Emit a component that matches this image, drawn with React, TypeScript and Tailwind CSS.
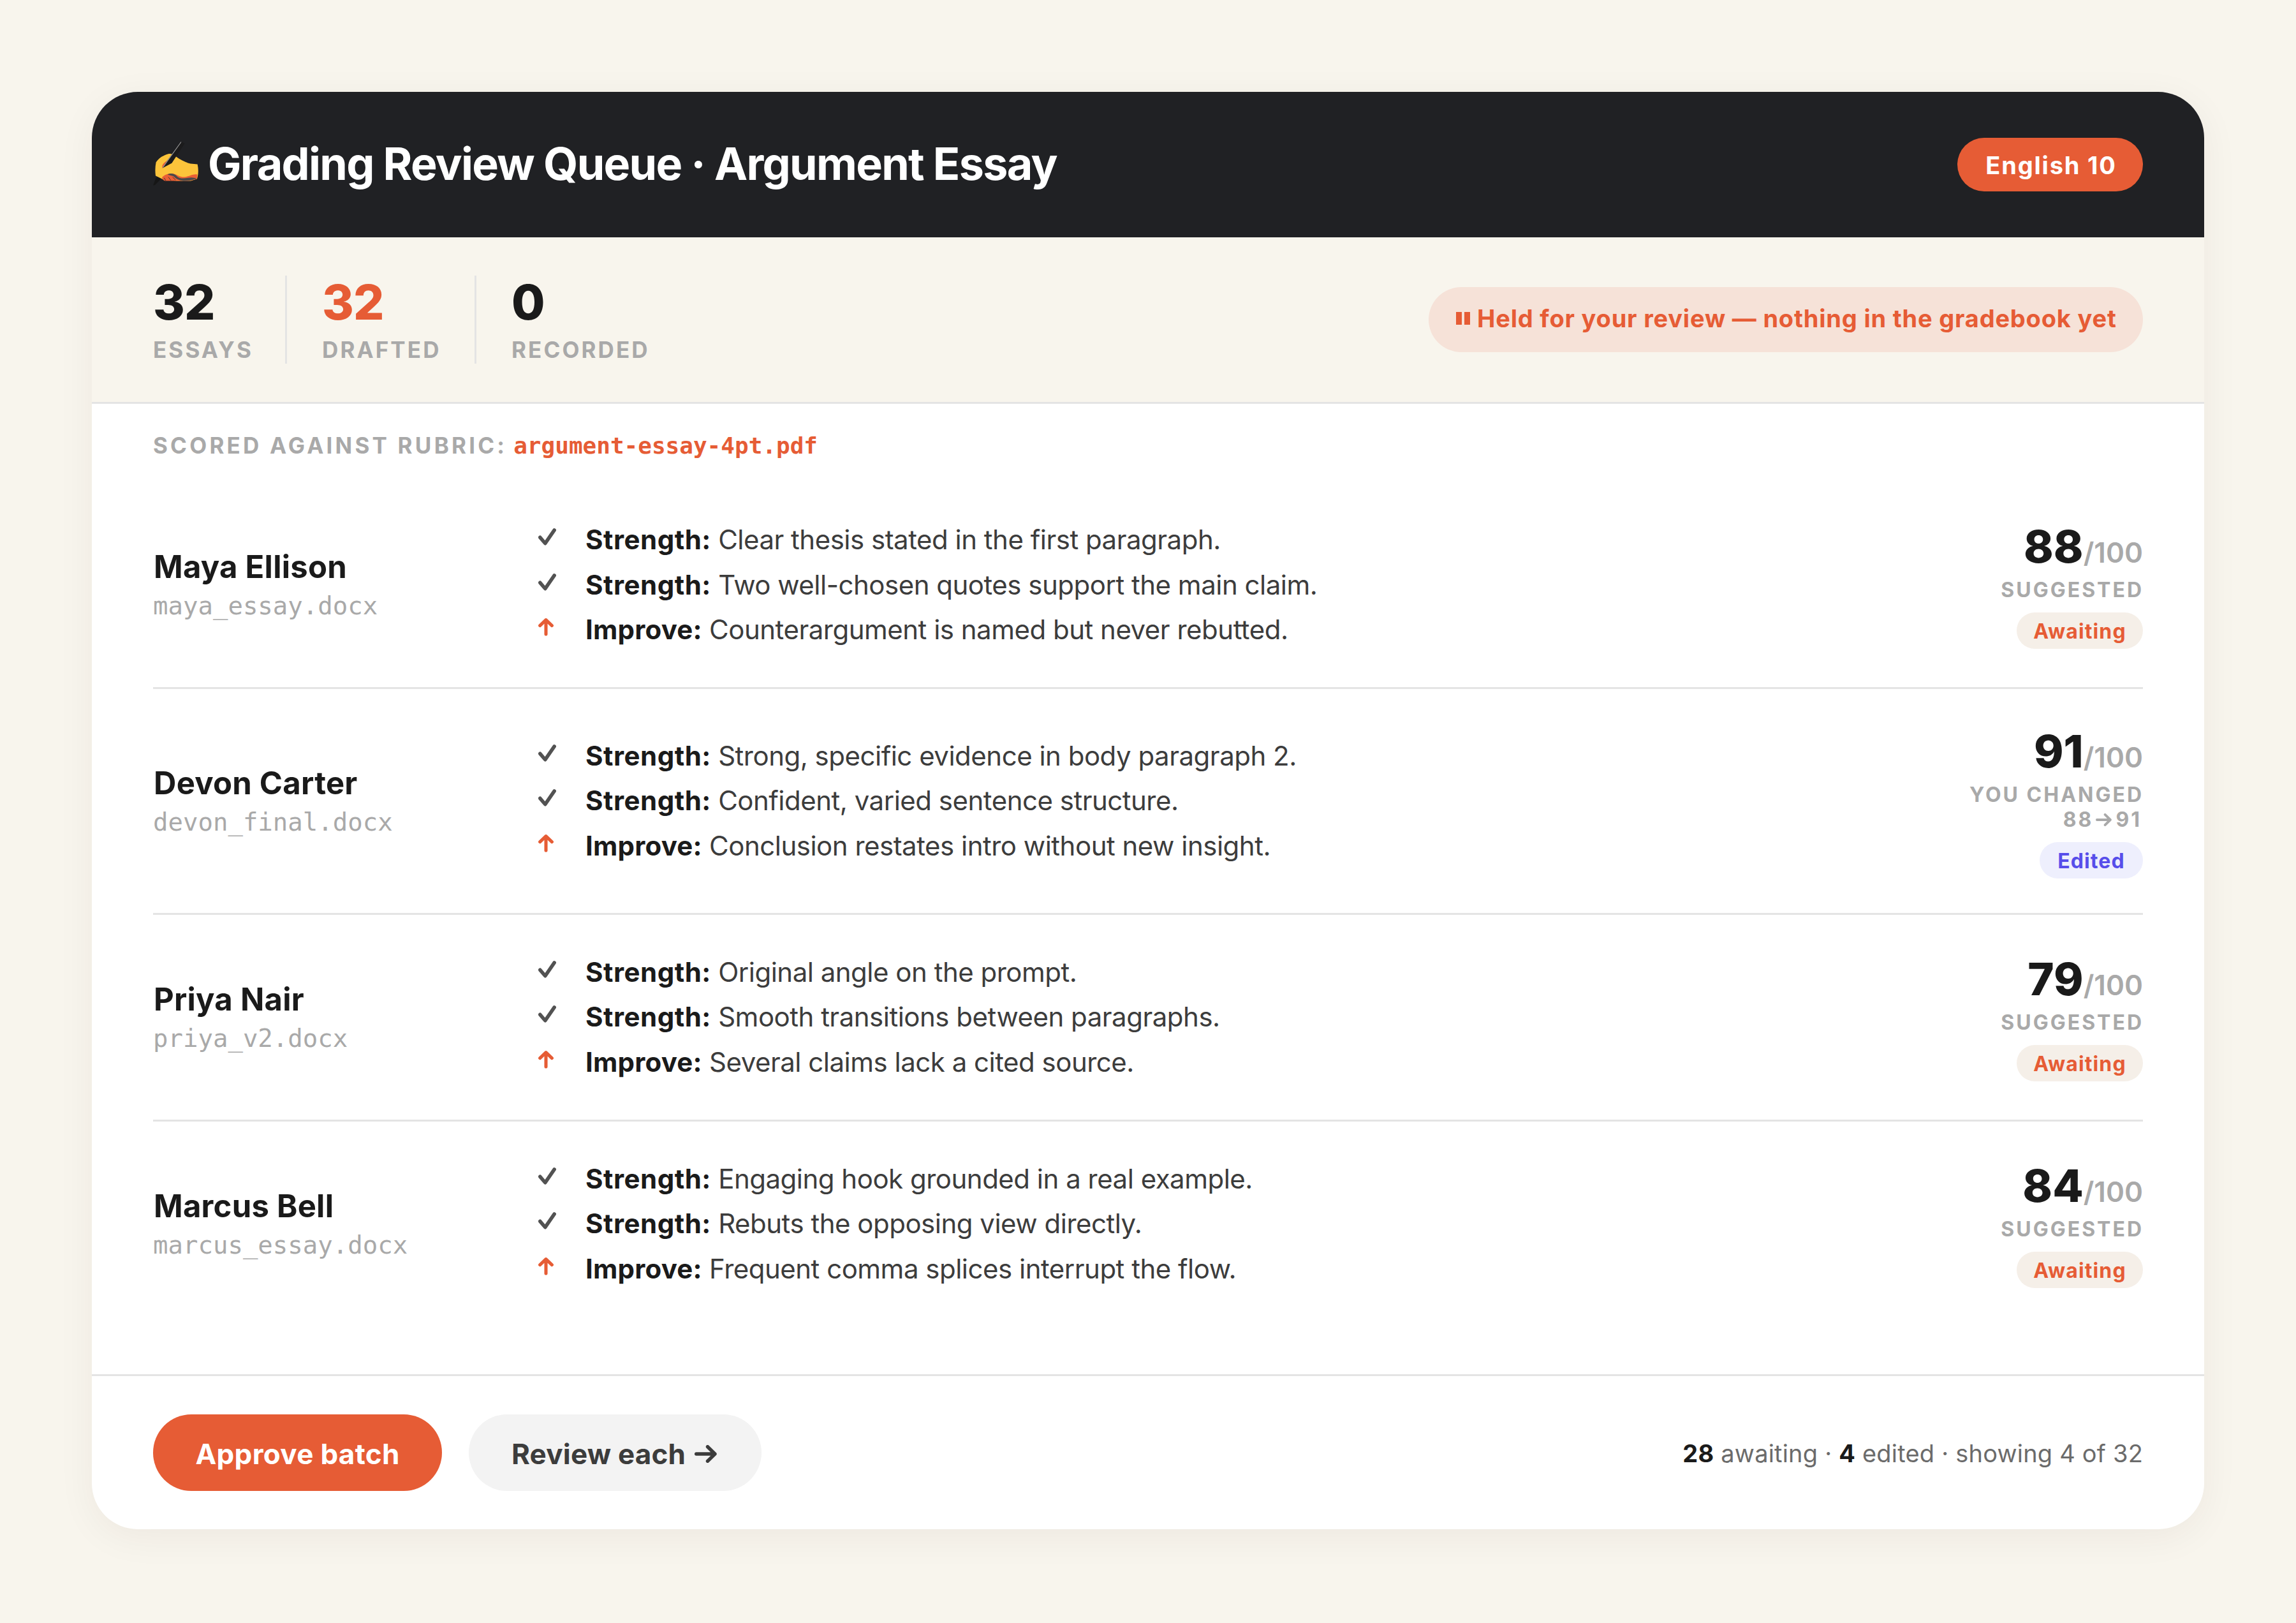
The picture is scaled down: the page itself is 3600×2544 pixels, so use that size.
import clsx from "clsx";

type Note = {
  kind: "strength" | "improve";
  text: string;
};

type Essay = {
  name: string;
  file: string;
  notes: Note[];
  score: number;
  changedFrom?: number;
};

const essays: Essay[] = [
  {
    name: "Maya Ellison",
    file: "maya_essay.docx",
    notes: [
      { kind: "strength", text: "Clear thesis stated in the first paragraph." },
      { kind: "strength", text: "Two well-chosen quotes support the main claim." },
      { kind: "improve", text: "Counterargument is named but never rebutted." },
    ],
    score: 88,
  },
  {
    name: "Devon Carter",
    file: "devon_final.docx",
    notes: [
      { kind: "strength", text: "Strong, specific evidence in body paragraph 2." },
      { kind: "strength", text: "Confident, varied sentence structure." },
      { kind: "improve", text: "Conclusion restates intro without new insight." },
    ],
    score: 91,
    changedFrom: 88,
  },
  {
    name: "Priya Nair",
    file: "priya_v2.docx",
    notes: [
      { kind: "strength", text: "Original angle on the prompt." },
      { kind: "strength", text: "Smooth transitions between paragraphs." },
      { kind: "improve", text: "Several claims lack a cited source." },
    ],
    score: 79,
  },
  {
    name: "Marcus Bell",
    file: "marcus_essay.docx",
    notes: [
      { kind: "strength", text: "Engaging hook grounded in a real example." },
      { kind: "strength", text: "Rebuts the opposing view directly." },
      { kind: "improve", text: "Frequent comma splices interrupt the flow." },
    ],
    score: 84,
  },
];

const WritingHand = () => (
  <svg className="h-[69px] w-[71px] shrink-0" viewBox="0 0 213 206">
    <path d="M0 206 L13 171 L28 158 L40 166 L36 176 L10 203 Z" fill="#161616" />
    <path
      d="M14 96 C30 74 50 63 72 57 C86 55 96 60 108 70 C128 84 152 98 176 103 L209 106 C214 128 214 152 207 174 L178 184 L110 184 L44 176 L12 160 C9 138 10 116 14 96 Z"
      fill="#fcc43b"
    />
    <path
      d="M42 168 C54 154 76 146 98 151 C118 157 128 168 150 166 C172 162 188 150 208 154 L206 174 C188 180 168 186 140 184 L56 184 C48 182 44 176 42 168 Z"
      fill="#ea5f35"
    />
    <path
      d="M68 154 C84 146 100 150 110 160 C122 174 142 174 164 170 C182 166 194 170 205 172 C188 180 170 184 142 184 C122 182 110 176 98 164 C90 158 80 160 68 154 Z"
      fill="#4a4a4a"
    />
    <path d="M52 170 L60 183 M72 166 L84 182 M92 166 L106 180" stroke="#4a3a34" strokeWidth="3" fill="none" />
    <path d="M44 124 C38 106 56 96 68 88 L74 96 Z" fill="#ea5f35" />
    <path d="M132 0 L149 8 L88 101 L44 124 L60 98 Z" fill="#1b1b1c" />
    <path d="M132 1 L62 98 L46 121" stroke="#9a9a9a" strokeWidth="3.5" fill="none" />
  </svg>
);

const CheckIcon = () => (
  <svg
    className="h-[27px] w-[28px]"
    viewBox="0 0 85 81"
    fill="none"
    stroke="#525252"
    strokeWidth="17"
    strokeLinecap="round"
    strokeLinejoin="round"
  >
    <path d="M8.5 43 L33 71.5 L76.5 8.5" />
  </svg>
);

const ArrowUpIcon = () => (
  <svg
    className="h-[29px] w-[24px]"
    viewBox="0 0 73 86"
    fill="none"
    stroke="#e65c35"
    strokeWidth="15.5"
    strokeLinecap="round"
    strokeLinejoin="round"
  >
    <path d="M36.5 11 V78 M8 37 L36.5 10 L65 37" />
  </svg>
);

const ArrowRightIcon = ({ className }: { className: string }) => (
  <svg
    className={className}
    viewBox="0 0 35 28"
    fill="none"
    stroke="currentColor"
    strokeWidth="5.4"
    strokeLinecap="round"
    strokeLinejoin="round"
  >
    <path d="M2.7 14 H31 M20.5 2.7 L32 14 L20.5 25.3" />
  </svg>
);

const Stat = ({ value, label, className }: { value: number; label: string; className?: string }) => (
  <div className={clsx("h-[138px]", className)}>
    <div className="text-[76px] leading-[82px] font-extrabold tracking-[-1px]">{value}</div>
    <div className="pt-3 text-[35px] leading-[44px] font-bold tracking-[3.1px] text-[#a9a9a9]">{label}</div>
  </div>
);

const EssayRow = ({ essay, last }: { essay: Essay; last: boolean }) => {
  const edited = essay.changedFrom !== undefined;
  return (
    <div
      className={clsx(
        "group flex items-center",
        edited ? "h-[354px]" : last ? "h-[321px]" : "h-[324px]",
        !last && "border-b-[3px] border-[#e4e4e4]",
      )}
    >
      <div className="w-[604px]">
        <div className="pl-[1px] text-[49px] leading-[66px] font-bold tracking-[0.25px]">{essay.name}</div>
        <div className="font-['DejaVu_Sans_Mono',monospace] text-[39px] leading-[56px] text-[#a9a9a9]">
          {essay.file}
        </div>
      </div>

      <ul>
        {essay.notes.map((note) => (
          <li key={note.text} className="flex h-[70.5px] items-center even:pb-[2px] group-first:even:pb-0">
            <span className="w-[74px] pb-[9px]">
              {note.kind === "strength" ? <CheckIcon /> : <ArrowUpIcon />}
            </span>
            <p className="text-[42px] leading-[68px] tracking-[-0.5px] text-[#3c3c3c]">
              <strong className={clsx("font-bold text-[#1a1a1a]", note.kind === "strength" ? "tracking-[0.5px]" : "tracking-[0.2px]")}>
                {note.kind === "strength" ? "Strength:" : "Improve:"}
              </strong>{" "}
              {note.text}
            </p>
          </li>
        ))}
      </ul>

      <div className={clsx("ml-auto flex flex-col items-end", edited && "pt-[3px]")}>
        <div className="text-[70.5px] leading-[81px] font-extrabold">
          {essay.score}
          <span className="text-[44px] leading-none font-semibold text-[#a9a9a9]">/100</span>
        </div>
        <div className="-mr-[1px] mt-2 flex flex-col items-end text-[32px] leading-[39px] font-bold tracking-[3px] text-[#a9a9a9]">
          {edited ? (
            <>
              <span>YOU CHANGED</span>
              <span className="mr-[3px] flex items-center">
                {essay.changedFrom}
                <ArrowRightIcon className="mr-[6px] ml-[4px] h-[20px] w-[25px]" />
                {essay.score}
              </span>
            </>
          ) : (
            <span>SUGGESTED</span>
          )}
        </div>
        <div
          className={clsx(
            "mt-4 flex h-[57px] items-center justify-center rounded-full pt-[2px] text-[32px] font-bold tracking-[1.1px]",
            edited ? "w-[162px] bg-[#eeeffd] text-[#574eea]" : "w-[198px] bg-[#f5efe8] text-[#e65c35]",
          )}
        >
          {edited ? "Edited" : "Awaiting"}
        </div>
      </div>
    </div>
  );
};

export default function App() {
  return (
    <div className="h-[2544px] w-[3600px] bg-[#f8f5ed] p-[144px] font-['Inter',sans-serif] text-[#1a1a1a]">
      <div className="flex h-[2253px] flex-col overflow-hidden rounded-[72px] bg-white shadow-[0_12px_60px_rgba(60,20,0,0.055)]">
        <header className="flex h-[228px] items-center justify-between bg-[#202124] px-24 text-white">
          <h1 className="flex items-center pb-[3px] text-[70px] font-bold tracking-[-1.7px]">
            <WritingHand />
            <span className="ml-[15px]">Grading Review Queue · Argument Essay</span>
          </h1>
          <span className="flex h-[84px] w-[291px] items-center justify-center rounded-full bg-[#e65c35] pt-[2px] pl-[3px] text-[38px] font-bold tracking-[1.8px]">
            English 10
          </span>
        </header>

        <section className="flex h-[261px] items-center justify-between border-b-[3px] border-[#e4e4e4] bg-[#f8f5ed] px-24">
          <div className="flex">
            <Stat value={32} label="ESSAYS" className="w-[210px] border-r-[3px] border-[#e4e4e4]" />
            <Stat
              value={32}
              label="DRAFTED"
              className="w-[297px] border-r-[3px] border-[#e4e4e4] pl-[55px] [&>div:first-child]:text-[#e65c35]"
            />
            <Stat value={0} label="RECORDED" className="pl-[55px]" />
          </div>
          <div className="flex h-[102px] w-[1120px] items-center rounded-full bg-[#f6e2d8] pb-1 pl-[43px] text-[38px] font-bold whitespace-nowrap tracking-[0.8px] text-[#e65c35]">
            <span className="mr-[11px] flex gap-1">
              <i className="h-5 w-[9px] bg-[#e65c35]" />
              <i className="h-5 w-[9px] bg-[#e65c35]" />
            </span>
            Held for your review — nothing in the gradebook yet
          </div>
        </section>

        <main className="flex-1 px-24">
          <div className="flex h-[123px] items-baseline pt-[43px] text-[35px] leading-[44px] font-bold tracking-[4.2px] text-[#a9a9a9]">
            SCORED AGAINST RUBRIC:
            <span className="ml-[10px] font-['DejaVu_Sans_Mono',monospace] text-[36px] font-bold tracking-normal text-[#e65c35]">
              argument-essay-4pt.pdf
            </span>
          </div>
          <div>
            {essays.map((essay, i) => (
              <EssayRow key={essay.name} essay={essay} last={i === essays.length - 1} />
            ))}
          </div>
        </main>

        <footer className="flex h-[243px] items-center border-t-[3px] border-[#e4e4e4] px-24">
          <button className="h-[120px] w-[453px] rounded-full bg-[#e65c35] pt-1 text-[44px] font-bold tracking-[0.3px] text-white">
            Approve batch
          </button>
          <button className="ml-[42px] flex h-[120px] w-[459px] items-center rounded-full bg-[#f3f3f3] pt-1 pl-[67px] text-[44px] font-bold tracking-[0.2px] text-[#3c3c3c]">
            Review each
            <ArrowRightIcon className="ml-[14px] h-[28px] w-[35px]" />
          </button>
          <p className="ml-auto pt-[2px] text-[38px] tracking-[0.2px] text-[#6b6b6b]">
            <strong className="font-bold text-[#1a1a1a]">28</strong> awaiting ·{" "}
            <strong className="font-bold text-[#1a1a1a]">4</strong> edited · showing 4 of 32
          </p>
        </footer>
      </div>
    </div>
  );
}
